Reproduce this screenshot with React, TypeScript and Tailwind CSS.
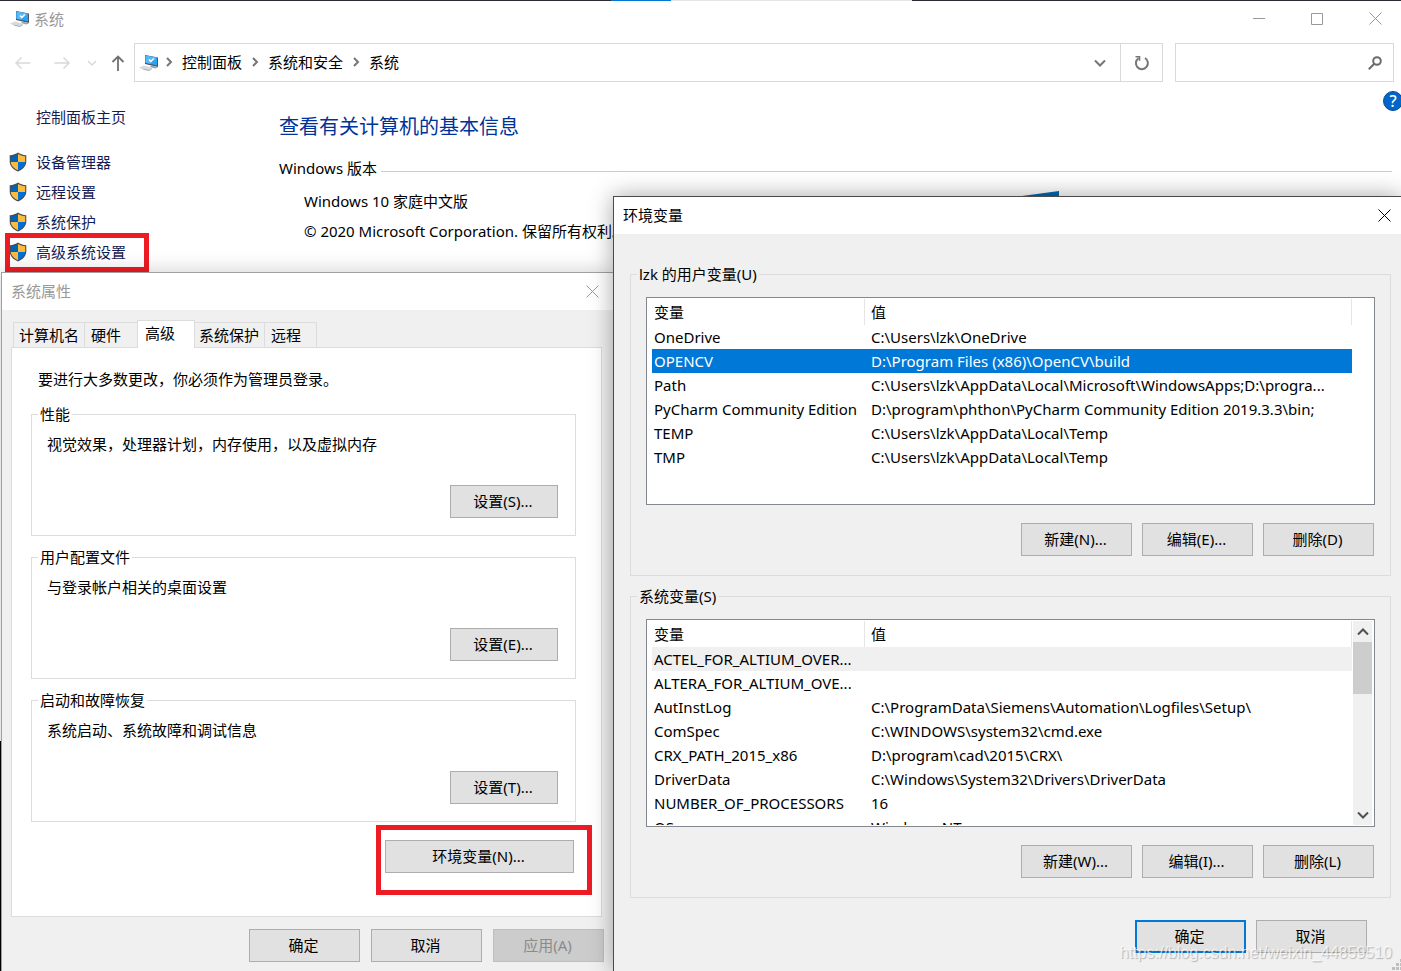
import type { ReactNode } from "react";

interface Variable {
    name: string;
    value: string;
}

const userVariables: Variable[] = [
    { name: "OneDrive", value: "C:\\Users\\lzk\\OneDrive" },
    { name: "OPENCV", value: "D:\\Program Files (x86)\\OpenCV\\build" },
    { name: "Path", value: "C:\\Users\\lzk\\AppData\\Local\\Microsoft\\WindowsApps;D:\\progra..." },
    { name: "PyCharm Community Edition", value: "D:\\program\\phthon\\PyCharm Community Edition 2019.3.3\\bin;" },
    { name: "TEMP", value: "C:\\Users\\lzk\\AppData\\Local\\Temp" },
    { name: "TMP", value: "C:\\Users\\lzk\\AppData\\Local\\Temp" },
];

const systemVariables: Variable[] = [
    { name: "ACTEL_FOR_ALTIUM_OVER...", value: "" },
    { name: "ALTERA_FOR_ALTIUM_OVE...", value: "" },
    { name: "AutInstLog", value: "C:\\ProgramData\\Siemens\\Automation\\Logfiles\\Setup\\" },
    { name: "ComSpec", value: "C:\\WINDOWS\\system32\\cmd.exe" },
    { name: "CRX_PATH_2015_x86", value: "D:\\program\\cad\\2015\\CRX\\" },
    { name: "DriverData", value: "C:\\Windows\\System32\\Drivers\\DriverData" },
    { name: "NUMBER_OF_PROCESSORS", value: "16" },
    { name: "OS", value: "Windows_NT" },
];

const ComputerIcon = () => (
    <svg className="h-5 w-5 shrink-0" viewBox="0 0 20 20">
        <path d="M6 2l13 2.500v9.500l-13-3z" fill="#4b5563" />
        <path d="M6.500 2.500l11.500 2.300v7.800l-11.500-2.800z" fill="#2ba3f0" />
        <path d="M6.500 2.500l11.500 2.300-7 6-4.500-1z" fill="#56b9f7" />
        <path d="M10 6.500l1.800 2 3-3" fill="none" stroke="#fff" strokeWidth="1.300" />
        <path d="M12 12.500l5 1.200 2 .8-3 1-5-1.500z" fill="#9aa3ab" />
        <path d="M0 14.500l5-2 8 2.300-3.500 2.700-5-.5z" fill="#d5dadd" />
        <path d="M4.500 16.200l5.500 1.300 3-2" fill="none" stroke="#aab0b5" />
    </svg>
);

const ShieldIcon = () => (
    <svg className="h-5 w-[18px] shrink-0" viewBox="0 0 18 20">
        <path d="M9 .5c2 1.500 5 2.600 8.300 2.700v6.300c0 4.500-3.500 8-8.300 10-4.800-2-8.300-5.500-8.300-10v-6.300c3.300-.1 6.300-1.200 8.300-2.700z" fill="#4c4c4c" />
        <path d="M9 2v8h-7.200v-5.800c2.700-.2 5.200-.9 7.200-2.200z" fill="#0063b8" />
        <path d="M9 2c2 1.300 4.500 2 7.200 2.200v5.800h-7.200z" fill="#fdbb3c" />
        <path d="M1.800 10h7.200v8.300c-4-1.900-7.100-4.800-7.200-8.300z" fill="#fdbb3c" />
        <path d="M9 10h7.200c-.1 3.500-3.200 6.400-7.200 8.300z" fill="#0070d8" />
    </svg>
);

const CloseIcon = () => (
    <svg className="h-[13px] w-[13px]" viewBox="0 0 13 13" fill="none" stroke="currentColor">
        <path d="M.5 .5l12 12M12.500 .5l-12 12" />
    </svg>
);

interface ChevronProps {
    d: string;
    className?: string;
}

const Chevron = ({ d, className = "text-[#767676]" }: ChevronProps) => (
    <svg className={`h-3 w-3 shrink-0 ${className}`} viewBox="0 0 12 12" fill="none" stroke="currentColor" strokeWidth="2">
        <path d={d} />
    </svg>
);

const DOWN = "M1 3.500l5 5 5-5";
const UP = "M1 8.500l5-5 5 5";
const RIGHT = "M4 2l4 4-4 4";

interface DialogButtonProps {
    children: ReactNode;
    className?: string;
    disabled?: boolean;
}

const DialogButton = ({ children, className = "w-[111px] border border-[#adadad]", disabled }: DialogButtonProps) => (
    <button
        type="button"
        disabled={disabled}
        className={`h-[33px] bg-[#e1e1e1] pr-[2px] pb-[2px] disabled:border-[#bfbfbf] disabled:bg-[#cccccc] disabled:text-[#8a8a8a] ${className}`}
    >
        {children}
    </button>
);

interface SettingsGroupProps {
    title: string;
    text: string;
    button: string;
}

const SettingsGroup = ({ title, text, button }: SettingsGroupProps) => (
    <fieldset className="border border-[#dcdcdc] pr-[17px] pb-[17px] pl-[15px]">
        <legend className="-ml-[9px] px-[2px] leading-5">{title}</legend>
        <p className="mt-[10px] leading-5">{text}</p>
        <DialogButton className="mt-[31px] ml-auto block w-[108px] border border-[#adadad]">{button}</DialogButton>
    </fieldset>
);

interface VariableGroupProps {
    title: string;
    rows: Variable[];
    selected?: string;
    hovered?: string;
    scroll?: boolean;
    buttons: string[];
}

const VariableGroup = ({ title, rows, selected, hovered, scroll, buttons }: VariableGroupProps) => (
    <fieldset className="min-w-0 border border-[#dcdcdc] px-[15px] pb-[19px]">
        <legend className="-ml-[9px] px-[2px] leading-5">{title}</legend>
        <div className="mt-[13px] flex h-[208px] overflow-hidden border border-[#828790] bg-white py-px pr-px pl-[5px]">
            <div className="min-w-0 flex-1 overflow-hidden">
                <table className="w-full table-fixed border-separate border-spacing-0 text-left">
                    <thead>
                        <tr className="h-[26px]">
                            <th className="w-[213px] border-r border-[#e5e5e5] px-[2px] font-normal">变量</th>
                            <th className="border-r border-[#e5e5e5] px-[6px] font-normal">值</th>
                        </tr>
                    </thead>
                    <tbody>
                        {rows.map((row) => (
                            <tr
                                key={row.name}
                                className={
                                    row.name === selected ? "h-6 bg-[#0078d7] text-white" : row.name === hovered ? "h-6 bg-[#f0f0f0]" : "h-6"
                                }
                            >
                                <td className="pl-[2px] leading-6 whitespace-nowrap">{row.name}</td>
                                <td className="px-[6px] leading-6 whitespace-nowrap">{row.value}</td>
                            </tr>
                        ))}
                    </tbody>
                </table>
            </div>
            {scroll ? (
                <div className="mr-px ml-px flex w-[19px] flex-col items-center bg-[#f0f0f0]">
                    <div className="flex h-[21px] items-center">
                        <Chevron d={UP} className="text-[#505050]" />
                    </div>
                    <div className="h-[52px] w-full bg-[#cdcdcd]" />
                    <div className="mt-auto flex h-[21px] items-center">
                        <Chevron d={DOWN} className="text-[#505050]" />
                    </div>
                </div>
            ) : (
                <div className="w-[21px]" />
            )}
        </div>
        <div className="mt-[18px] mr-px flex justify-end gap-[10px]">
            {buttons.map((label) => (
                <DialogButton key={label}>{label}</DialogButton>
            ))}
        </div>
    </fieldset>
);

const tabs = [
    { label: "计算机名", className: "w-[71px] border-l pl-[5px]" },
    { label: "硬件", className: "w-[53px] border-l pl-[6px]" },
    { label: "高级", className: "w-[58px]" },
    { label: "系统保护", className: "w-[69px] pl-1" },
    { label: "远程", className: "w-[53px] border-x pl-[6px]" },
];

const SystemProperties = () => (
    <section className="absolute top-[272px] bottom-0 left-px flex w-[613px] flex-col border-t border-l border-[#a0a0a0] bg-[#f0f0f0] shadow-[0_0_20px_rgba(0,0,0,0.2)]">
        <header className="flex h-[37px] shrink-0 items-center justify-between bg-white pr-[15px] pb-px pl-[9px] text-[#999999]">
            <h2>系统属性</h2>
            <button type="button" aria-label="关闭">
                <CloseIcon />
            </button>
        </header>
        <div className="flex flex-1 flex-col pt-[10px] pl-[9px]">
            <div role="tablist" className="z-10 -mb-px flex items-end pl-[2px]">
                {tabs.map((tab) => (
                    <button
                        key={tab.label}
                        type="button"
                        role="tab"
                        aria-selected={tab.label === "高级"}
                        className={
                            tab.label === "高级"
                                ? `h-7 border border-b-0 border-[#dcdcdc] bg-white pr-3 pb-1 whitespace-nowrap ${tab.className}`
                                : `h-[26px] border-y border-[#dcdcdc] text-left whitespace-nowrap ${tab.className}`
                        }
                    >
                        {tab.label}
                    </button>
                ))}
            </div>
            <div className="mr-3 flex h-[570px] flex-col gap-[11px] border border-[#dcdcdc] bg-white pt-[21px] pr-[25px] pl-[19px]">
                <p className="mb-1 pl-[7px] leading-5">要进行大多数更改，你必须作为管理员登录。</p>
                <SettingsGroup title="性能" text="视觉效果，处理器计划，内存使用，以及虚拟内存" button="设置(S)..." />
                <SettingsGroup title="用户配置文件" text="与登录帐户相关的桌面设置" button="设置(E)..." />
                <SettingsGroup title="启动和故障恢复" text="系统启动、系统故障和调试信息" button="设置(T)..." />
                <div className="relative mt-[7px] mr-[2px] flex self-end">
                    <DialogButton className="w-[189px] border border-[#adadad]">环境变量(N)...</DialogButton>
                    <span className="absolute -top-[15px] -right-[18px] -bottom-[22px] -left-[9px] border-5 border-[#ed1c24]" />
                </div>
            </div>
            <div className="mt-3 mr-[10px] flex justify-end gap-[11px]">
                <DialogButton>确定</DialogButton>
                <DialogButton>取消</DialogButton>
                <DialogButton disabled>应用(A)</DialogButton>
            </div>
        </div>
    </section>
);

const EnvironmentVariables = () => (
    <section className="absolute top-[196px] right-0 bottom-0 left-[613px] border-t border-l border-[#4a4a4a] bg-[#f0f0f0] shadow-[0_0_22px_rgba(0,0,0,0.35)]">
        <header className="flex h-[37px] items-center justify-between bg-white pr-[10px] pb-px pl-[9px]">
            <h2>环境变量</h2>
            <button type="button" aria-label="关闭">
                <CloseIcon />
            </button>
        </header>
        <div className="flex flex-col gap-[10px] pt-[30px] pr-[10px] pl-4">
            <VariableGroup
                title="lzk 的用户变量(U)"
                rows={userVariables}
                selected="OPENCV"
                buttons={["新建(N)...", "编辑(E)...", "删除(D)"]}
            />
            <VariableGroup
                title="系统变量(S)"
                rows={systemVariables}
                hovered="ACTEL_FOR_ALTIUM_OVER..."
                scroll
                buttons={["新建(W)...", "编辑(I)...", "删除(L)"]}
            />
            <div className="mt-3 mr-6 flex justify-end gap-[10px]">
                <DialogButton className="w-[111px] border-2 border-[#0078d7]">确定</DialogButton>
                <DialogButton>取消</DialogButton>
            </div>
        </div>
        <svg className="absolute right-0 bottom-0 h-3 w-[9px] text-[#bfbfbf]" viewBox="0 0 9 12" fill="currentColor">
            <path d="M8 0h1v3h-1zM4 4h3v3h-3zM8 4h1v3h-1zM0 8h3v3h-3zM4 8h3v3h-3zM8 8h1v3h-1z" />
        </svg>
        <p className="absolute right-[9px] bottom-2 font-['Liberation_Sans',sans-serif] text-base leading-5 text-white/70 [text-shadow:1px_1px_1px_rgba(0,0,0,0.25)]">
            https://blog.csdn.net/weixin_44859510
        </p>
    </section>
);

const sideLinks = ["设备管理器", "远程设置", "系统保护", "高级系统设置"];

const SystemWindow = () => (
    <main className="flex-1 bg-white">
        {/* sliver of the windows behind */}
        <div className="flex h-px bg-[#2b2b33]">
            <span className="ml-[611px] w-[60px] bg-[#0078d7]" />
            <span className="w-[241px] bg-[#e5e5e5]" />
        </div>
        <header className="flex h-[37px] items-center pr-[19px] pb-[2px] pl-[10px] text-[#999999]">
            <ComputerIcon />
            <h1 className="ml-1">系统</h1>
            <div className="ml-auto flex items-center gap-[46px]">
                <button type="button" aria-label="最小化">
                    <svg className="h-3 w-3" viewBox="0 0 12 12" stroke="currentColor">
                        <path d="M0 5.500h12" />
                    </svg>
                </button>
                <button type="button" aria-label="最大化">
                    <svg className="h-3 w-3" viewBox="0 0 12 12" fill="none" stroke="currentColor">
                        <path d="M.5 .5h11v11h-11z" />
                    </svg>
                </button>
                <button type="button" aria-label="关闭">
                    <CloseIcon />
                </button>
            </div>
        </header>
        <nav className="mt-[5px] flex h-[39px] items-center pr-[7px]">
            <div className="flex w-[134px] shrink-0 items-center pl-[15px] text-[#d9d9d9]">
                <svg className="h-4 w-4" viewBox="0 0 16 16" fill="none" stroke="currentColor" strokeWidth="1.500">
                    <path d="M15.500 8h-14.500M6.500 2.500l-5.500 5.500 5.500 5.500" />
                </svg>
                <svg className="ml-[23px] h-4 w-4" viewBox="0 0 16 16" fill="none" stroke="currentColor" strokeWidth="1.500">
                    <path d="M.5 8h14.500M9.500 2.500l5.500 5.500-5.500 5.500" />
                </svg>
                <svg className="ml-4 h-3 w-3" viewBox="0 0 12 12" fill="none" stroke="currentColor" strokeWidth="1.500">
                    <path d="M2 4l4 4 4-4" />
                </svg>
                <svg className="ml-3 h-4 w-4 text-[#707070]" viewBox="0 0 16 16" fill="none" stroke="currentColor" strokeWidth="1.800">
                    <path d="M8 16v-14.500M2.500 7l5.500-5.500 5.500 5.500" />
                </svg>
            </div>
            <div className="flex h-full flex-1 items-center border border-[#d9d9d9] pr-[14px] pl-1">
                <ComputerIcon />
                <ol className="flex items-center pb-[2px]">
                    {["控制面板", "系统和安全", "系统"].map((crumb) => (
                        <li key={crumb} className="flex items-center">
                            <span className="mx-1">
                                <Chevron d={RIGHT} />
                            </span>
                            <a href="#" className="mx-[3px]">
                                {crumb}
                            </a>
                        </li>
                    ))}
                </ol>
                <button type="button" aria-label="历史记录" className="ml-auto">
                    <Chevron d={DOWN} />
                </button>
            </div>
            <button type="button" aria-label="刷新" className="-ml-px flex h-full w-[43px] items-center justify-center border border-[#d9d9d9]">
                <svg className="h-4 w-4 text-[#767676]" viewBox="0 0 16 16" fill="none" stroke="currentColor" strokeWidth="2">
                    <path d="M11 3a6 6 0 1 1-6.500.2" />
                    <path d="M1.500 1.800h4v4" strokeWidth="1.600" />
                </svg>
            </button>
            <label className="ml-3 flex h-full w-[219px] items-center border border-[#d9d9d9] pr-[11px]">
                <input type="text" aria-label="搜索" className="min-w-0 flex-1 outline-none" />
                <svg className="h-[14px] w-[14px] text-[#6b6b6b]" viewBox="0 0 14 14" fill="none" stroke="currentColor" strokeWidth="2">
                    <circle cx="9" cy="5" r="3.800" />
                    <path d="M6.300 7.700l-5.500 5.500" />
                </svg>
            </label>
        </nav>
        <div className="flex">
            <aside className="w-[279px] shrink-0 pt-[20px] text-[#151c55]">
                <a href="#" className="ml-9 block leading-[30px]">
                    控制面板主页
                </a>
                <ul className="mt-[15px] pl-[9px]">
                    {sideLinks.map((link) => (
                        <li key={link} className="relative leading-[30px]">
                            <a href="#" className="flex items-center gap-[9px]">
                                <ShieldIcon />
                                {link}
                            </a>
                            {link === "高级系统设置" && (
                                <span className="absolute -top-1 -left-1 h-[39px] w-36 border-5 border-[#ed1c24]" />
                            )}
                        </li>
                    ))}
                </ul>
            </aside>
            <div className="relative min-w-0 flex-1 pt-[30px] pr-[9px]">
                <h2 className="text-xl leading-[30px] text-[#003399]">查看有关计算机的基本信息</h2>
                <div className="mt-[11px] flex items-center gap-1 leading-[30px]">
                    <h3>Windows 版本</h3>
                    <span className="mt-[6px] h-px flex-1 bg-[#cccccc]" />
                </div>
                <div className="mt-[3px] pl-[25px] leading-[30px] whitespace-nowrap">
                    <p>Windows 10 家庭中文版</p>
                    <p>© 2020 Microsoft Corporation. 保留所有权利。</p>
                </div>
                <svg className="absolute top-[109px] left-[743px] h-[5px] w-[37px]" viewBox="0 0 37 5" fill="#0068b4">
                    <path d="M0 5l37-5v5z" />
                </svg>
                <button
                    type="button"
                    aria-label="帮助"
                    className="absolute top-[9px] -right-[2px] h-5 w-5 rounded-full border border-[#0a4a8c] bg-[#0066cc] text-base leading-none font-medium text-white"
                >
                    ?
                </button>
            </div>
        </div>
    </main>
);

export default function App() {
    return (
        <div className="relative flex min-h-screen flex-col overflow-hidden bg-black pb-[230px] font-['Noto_Sans','Noto_Sans_CJK_SC',sans-serif] text-[15px] leading-5 text-black">
            <SystemWindow />
            <SystemProperties />
            <EnvironmentVariables />
        </div>
    );
}
